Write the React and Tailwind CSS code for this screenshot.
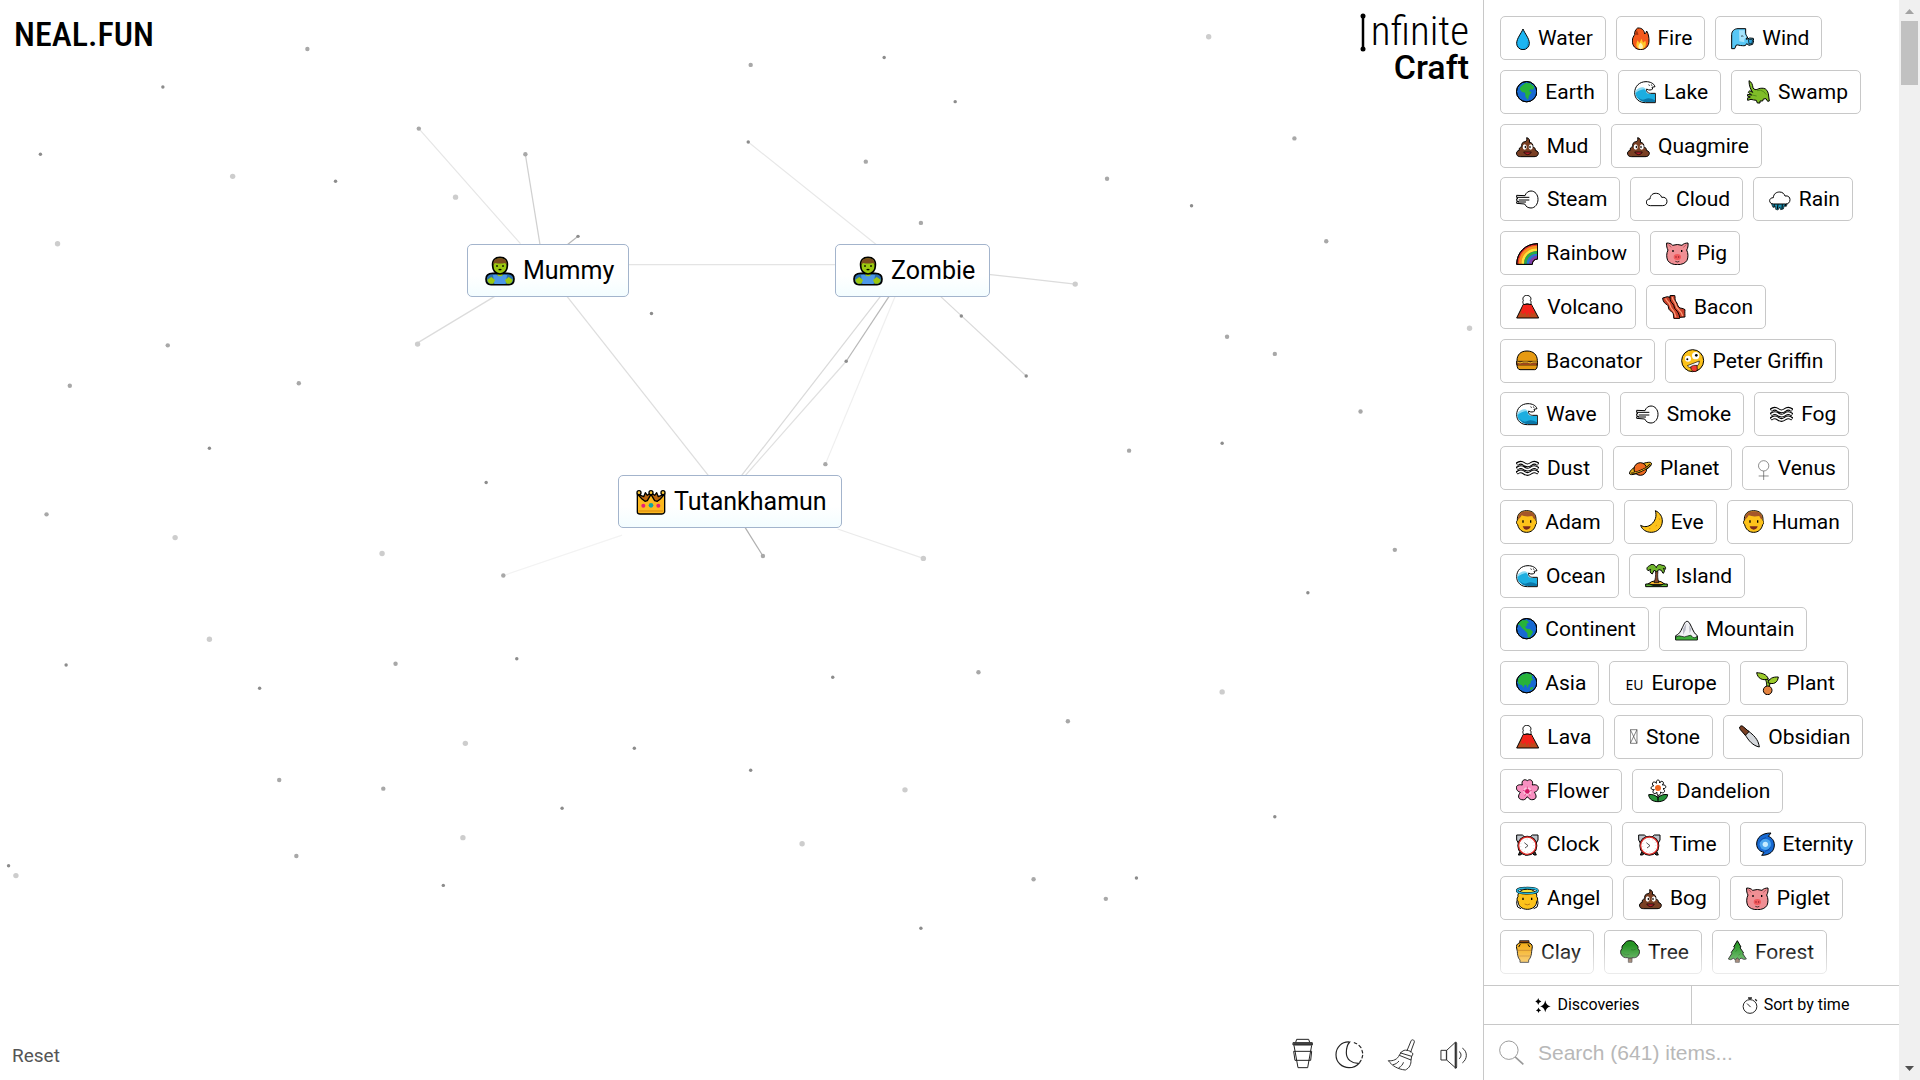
import { useState } from "react";

const Globe = ({ children }) => (
  <>
    <circle cx="32" cy="35" r="30.5" fill="#1769d2" />
    <g stroke="none" fill="#27b339">{children}</g>
    <circle cx="32" cy="35" r="30.5" fill="none" />
  </>
);

// [viewBox, drawing], every box is 72 units tall
const icons = {
  water: ["96 78 42 72", (
    <>
      <path fill="#1cb5f2" d="M117 87C112 100 98 115 98 130a19 19 0 0 0 38 0C136 115 122 100 117 87z" />
      <path stroke="none" fill="#0d8fd0" d="M130 122c3 14-3 23-14 24 14 3 20-12 14-24z" />
    </>
  )],
  fire: ["442 78 53 72", (
    <>
      <path fill="#f4591c" d="M459 84c14-1 20 8 21 18 3-2 5-5 6-9 6 10 7 20 7 30 0 15-10 26-25 26s-25-11-25-26c0-9 4-15 7-19-1-8 2-15 9-20z" />
      <path stroke="none" fill="#a8330c" d="M450 104l7-15c1 8 5 9 4 16z" />
      <path stroke="none" fill="#ffc629" d="M459 121l5 8 7-13 4 12 7-6c5 14-2 25-14 25s-17-11-9-26z" />
      <path stroke="none" fill="#fff3b0" d="M468 128c9 7 9 18 0 19-9-1-9-12 0-19z" />
    </>
  )],
  wind: ["738 78 69 72", (
    <>
      <path fill="#58c7f5" d="M740 146v-42c0-11 8-18 19-18h23v14c0 5 5 9 6 14h-4v4l10-4 11 1 1 7-3 11-11 3-7-5c-2 6-6 7-13 6-8 0-13-3-18-2l-5 11z" />
      <path stroke="none" fill="#a6e3fb" d="M762 91h17v12l6 9-7 6v9l-15-3z" />
      <path fill="#2a9fd8" strokeWidth="2" d="M790 118l13 1-2 11-9 2z" />
      <path fill="none" strokeWidth="2" d="M768 109q3-3 7 0" />
    </>
  )],
  earth: ["0 0 64 72", (
    <Globe>
      <path d="M14 20l14-11 14 1 13 10-4 10-6-3-6 6 8 4-8 10-3 13-7-9-2-13-9-2-7-8z" />
    </Globe>
  )],
  americas: ["0 0 64 72", (
    <Globe>
      <path d="M5 23l11-13 17 0 6 7-8 3 3 5-7 4 5 6 10 1 9 8-5 10-6 8-5-1-1-12-7-8-9-8-7-9z" />
    </Globe>
  )],
  asia: ["0 0 64 72", (
    <Globe>
      <path d="M5 28C9 14 22 6 36 7l13 5-2 9 5 6-8 2 0 8-6 4-3 10-5-10-5 1-1 9-7-9-9-2zM42 50l10-3-2 8-8 2z" />
    </Globe>
  )],
  wave: ["96 397 66 72", (
    <>
      <path fill="#fff" d="M160 465v-28h-14c-9 0-14-6-12-13 7 5 14 3 18 0l-2-5 9-2c-3-10-15-15-27-15-20 0-34 14-34 33 0 18 13 30 32 30z" />
      <path stroke="none" fill="#1caee0" d="M159 463v-24h-14c-8 0-14-5-14-13-10-6-20 0-31 8 0 18 14 29 32 29z" />
      <path stroke="none" fill="#8bdaf3" d="M101 429c10-12 24-14 31-5-10 0-21 3-31 12z" />
      <path stroke="none" fill="#0b77a8" d="M108 448q10 12 22 6t29 4v5h-30q-14-2-21-15z" />
      <path fill="none" strokeWidth="2" d="M139 411l5 3M148 410l2 5" />
    </>
  )],
  croc: ["788 240 69 72", (
    <>
      <path fill="#7fbd28" d="M794 242c8 4 11 12 12 22 4 5 8 6 13 4 5-3 12-4 19-3 8 1 12 9 14 16l3 22-5 1-5-8-8 1-2 6-8 0 0 6h-8l-3-8c-6 0-10-2-16-3l-10 3-2-6 10-4-9-3 1-5 12 2-10-8 4-5 9 5c-6-8-11-20-11-35z" />
      <path fill="none" strokeWidth="2" stroke="#3e7512" d="M818 272q12-4 20 3l8 9M803 285l14 3" />
    </>
  )],
  poop: ["96 402 68 72", (
    <>
      <path fill="#7a4024" d="M128 413c8 1 10 9 8 14 9 1 12 7 10 14 6 1 9 5 8 10 8 2 11 8 8 13-2 5-7 6-12 6h-40c-6 0-11-2-12-7-2-6 2-11 8-12-2-6 2-10 8-11-3-8 1-14 9-15 4-1 7-5 5-12z" />
      <ellipse cx="122" cy="441" rx="6" ry="8" fill="#fff" stroke="none" />
      <ellipse cx="140" cy="441" rx="6" ry="8" fill="#fff" stroke="none" />
      <ellipse cx="124" cy="441" rx="2" ry="4" fill="#000" stroke="none" />
      <ellipse cx="138" cy="441" rx="2" ry="4" fill="#000" stroke="none" />
      <path fill="#b3202b" strokeWidth="2" d="M119 456h23q-3 8-11 8t-12-8z" />
    </>
  )],
  gust: ["96 563 69 72", (
    <>
      <path fill="#fff" d="M123 589c3-9 10-14 18-14 12 0 21 11 21 25s-9 26-21 26c-9 0-15-4-19-12l-24-2v-5h6l-6-3v-6h4l-4-4v-6z" />
      <path fill="none" strokeWidth="3" d="M98 594h38M104 602h32M102 608h24" />
    </>
  )],
  cloud: ["484 563 65 72", (
    <path fill="#fff" d="M497 619c-16 0-16-20-1-20 1-12 9-18 19-17 9 0 14 6 16 12 10-2 16 4 16 12s-5 13-14 13z" />
  )],
  rain: ["850 563 65 72", (
    <>
      <path fill="#1a8fb0" strokeWidth="2" d="M857 612h48l-3 9-6-2-3 10-8 2-3-8-5 9-7-2v-8l-8 2z" />
      <path fill="none" stroke="#000" d="M866 615l-1 9M877 615l-2 14M890 615l-1 14M900 614l-2 8" />
      <path fill="#fff" d="M864 614c-16 0-16-19-1-19 1-12 9-17 19-17 9 0 14 6 16 12 10-2 15 4 15 11 0 8-5 13-13 13z" />
    </>
  )],
  rainbow: ["96 723 67 72", (
    <>
      <path fill="#e5322d" d="M98 793c0-35 26-62 63-62v46c-10 0-16 7-16 16z" />
      <g fill="none" strokeWidth="8">
        <path stroke="#f7941d" d="M108 792c0-30 22-51 52-51" />
        <path stroke="#fde23a" d="M116 792c0-26 18-43 44-43" />
        <path stroke="#23b04a" d="M124 792c0-21 15-35 36-35" />
        <path stroke="#2578d4" d="M132 792c0-16 12-27 28-27" />
        <path stroke="#7c3fae" d="M140 792c0-12 9-20 20-20" />
      </g>
      <path fill="none" d="M98 793c0-35 26-62 63-62v46c-10 0-16 7-16 16z" />
    </>
  )],
  pig: ["543 723 69 72", (
    <>
      <path fill="#f08f94" d="M545 729c7 0 14 2 18 7q14-5 28 0c4-5 11-7 18-7 1 9-1 16-4 21 5 10 5 22 1 31-5 9-16 13-29 13s-24-4-29-13c-4-9-4-21 1-31-3-5-5-12-4-21z" />
      <path fill="none" strokeWidth="2" stroke="#9c3d48" d="M550 734l9 8M604 734l-9 8" />
      <ellipse cx="577" cy="771" rx="11" ry="9" fill="#f2595c" stroke="none" />
      <path d="M564 750v6M590 750v6" strokeWidth="4" />
      <path strokeWidth="3" stroke="#7c1620" d="M573 769v4M581 769v4" />
      <path fill="none" strokeWidth="2" d="M571 784q6 4 12 0" />
    </>
  )],
  volcano: ["96 75 70 72", (
    <>
      <path fill="#bd4a1c" d="M98 144l20-41h24l22 41z" />
      <path stroke="none" fill="#f2231b" d="M118 104h24l10 23-6 6-5-8-3 16-5-14-5 12-4-13-5 7-8-5z" />
      <path fill="#fff" d="M119 104c-2-5-4-8-1-12-4-8 2-16 10-16 10 0 16 8 11 16 4 3 1 8 2 12q-11-6-22 0z" />
    </>
  )],
  bacon: ["532 75 71 72", (
    <>
      <path fill="#c9402a" d="M534 84l14-4 8 2v-5l14-1c3 7-1 13 4 19 5 5 4 12 9 17 5 4 12 2 18 7-1 9 0 16 0 22l-14 1-3 4h-16c-3-8 0-14-4-18-5-5-8-5-11-10s0-10-6-14c-7-3-13-11-13-20z" />
      <path fill="none" strokeWidth="3" d="M556 80c0 12 3 17 9 22 5 6 2 12 8 17s10 12 13 25" />
      <path fill="none" stroke="#ff9d78" strokeWidth="4" d="M543 85c2 9 10 11 12 18s3 12 9 17 5 10 10 22M563 81c0 9 7 13 9 20s3 12 9 17 10 10 13 20" />
    </>
  )],
  burger: ["96 237 66 72", (
    <>
      <path fill="#e69a12" d="M99 272c0-18 11-29 30-29s31 11 31 29q3 6 0 12c0 8-2 15-8 15h-44c-6 0-9-7-9-15q-3-6 0-12z" />
      <path fill="#8a4a1c" strokeWidth="2" d="M98 274h62v11H98z" />
      <path stroke="#f2c12b" strokeWidth="3" fill="none" d="M100 276l8 3 10-3h12l9 3 8-3h12" />
      <path stroke="#e2571e" strokeWidth="2" d="M102 283h54" />
    </>
  )],
  zany: ["588 237 70 72", (
    <>
      <circle cx="623" cy="272" r="33" fill="#fcc21b" />
      <circle cx="609" cy="266" r="9" fill="#fff" stroke="none" />
      <circle cx="632" cy="257" r="11" fill="#fff" stroke="none" />
      <circle cx="607" cy="268" r="3" fill="#000" stroke="none" />
      <circle cx="634" cy="256" r="4" fill="#000" stroke="none" />
      <path fill="#fff" strokeWidth="2" d="M607 287l36-14c0 10-6 18-16 20s-16-1-20-6z" />
      <path fill="#f03c32" strokeWidth="2" d="M617 290q8-6 19-4l1 14q-5 7-14 4-6-5-6-14z" />
    </>
  )],
  fog: ["854 397 69 72", (
    <>
      <g fill="none" stroke="#000" strokeWidth="11">
        <path d="M856 422q11-9 22-1t21 0 22 1M856 435q11-9 22-1t21 0 22 1M856 448q11-9 22-1t21 0 22 1" />
      </g>
      <g fill="none" stroke="#fff" strokeWidth="5">
        <path d="M858 422q10-9 20-1t21 0 20 1M858 435q10-9 20-1t21 0 20 1M858 448q10-9 20-1t21 0 20 1" />
      </g>
    </>
  )],
  planet: ["433 558 69 72", (
    <>
      <path fill="#e8b21e" d="M435 612c-2-8 8-18 26-26s36-12 39-7c3 6-8 16-24 24s-38 14-41 9z" />
      <circle cx="467" cy="597" r="19" fill="#ee6a1f" />
      <path fill="none" stroke="#000" strokeWidth="6" d="M440 609c8 1 22-3 34-9 12-5 19-11 23-17" />
      <path fill="none" stroke="#e8b21e" strokeWidth="3" d="M440 609c8 1 22-3 34-9 12-5 19-11 23-17" />
    </>
  )],
  venus: ["819 558 34 72", (
    <path fill="none" stroke="#555" strokeWidth="2" d="M836 572a15 15 0 1 1 0 31 15 15 0 1 1 0-31zM836 603v29M821 618h30" />
  )],
  man: ["96 720 64 72", (
    <>
      <path fill="#fcc21b" d="M100 751c-1-18 9-29 28-29s29 11 28 29c4 4 3 10-1 13-3 14-13 23-27 23s-24-9-27-23c-4-3-5-9-1-13z" />
      <path fill="#a4562a" stroke="none" d="M102 749c-1-16 9-25 26-25s27 9 26 25c-5-2-7-6-9-11-12 2-22 2-32-2-3 6-7 10-11 13z" />
      <path d="M117 751v7M140 751v7" strokeWidth="4" />
      <path fill="#7b2a1c" stroke="none" d="M116 769h24q-3 10-12 10t-12-10z" />
    </>
  )],
  moon: ["465 720 69 72", (
    <>
      <path fill="#fcc21b" d="M511 722c14 6 21 18 21 31 0 20-15 34-33 34-15 0-28-8-32-21 10 6 22 5 32-3 12-10 17-24 12-41z" />
      <path stroke="#e08f13" strokeWidth="3" fill="none" d="M522 745l3 5M512 768l4-3M492 776h4" />
    </>
  )],
  island: ["480 72 69 72", (
    <>
      <path fill="#f7b52c" d="M486 134q28-24 56 0z" />
      <path fill="#5cb531" d="M482 132h13l8 4h24l8-4h12v8h-65z" />
      <path fill="#85482a" strokeWidth="2" d="M511 94h8c-2 12-1 24 3 34h-15c4-10 6-22 4-34z" />
      <path fill="#6fb52c" d="M514 83c2-9 10-12 17-7 8-1 13 6 10 12l-6-3c5 6 4 13-1 15l-5-9-7-2-7 6-8-4-5 11c-7-3-8-8-5-14l-8 4c-6-5-3-12 4-14 6-8 16-6 21 5z" />
    </>
  )],
  mountain: ["570 232 69 72", (
    <>
      <path fill="#f1f1f4" d="M572 300v-12c9-3 15-12 20-24 5-10 8-19 14-19s9 8 14 18c5 11 9 20 17 25v12z" />
      <path stroke="none" fill="#b9bac6" d="M594 268l10-17-2 20-8 15zM612 256l7 13-5 12z" />
      <path fill="#3fae3a" strokeWidth="2" d="M572 292q10-6 18-2t18-1 14 2 15-1v11h-65z" />
    </>
  )],
  plant: ["799 393 69 72", (
    <>
      <path fill="none" stroke="#000" strokeWidth="10" d="M827 413q8 5 8 32M836 445q-1-18 8-24" />
      <path fill="none" stroke="#7cb52b" strokeWidth="5" d="M827 413q8 5 8 32M836 443q-1-18 8-22" />
      <path fill="#9ccb2b" d="M801 398c15 1 30 4 35 19-18 6-32-2-35-19z" />
      <path fill="#9ccb2b" d="M866 411c-17-1-28 5-31 17 17 7 29 0 31-17z" />
      <circle cx="834" cy="451" r="13" fill="#e48340" />
    </>
  )],
  knife: ["751 555 64 72", (
    <>
      <path fill="#d5d8dc" d="M769 583l10-10c15 12 30 24 33 48-19-4-32-18-43-38z" />
      <path fill="#7a4024" d="M753 561c4-5 8-4 12 0l16 14-11 11-15-17q-3-4-2-8z" />
    </>
  )],
  blossom: ["96 717 68 72", (
    <>
      <path fill="#f78fc0" d="M130 722c9-7 19 0 15 13 13-3 21 3 17 13-2 5-6 7-11 9 8 10 7 20-4 22-7 1-12-2-17-9-5 8-10 11-17 9-11-2-12-12-4-22-5-2-9-4-11-9-4-10 4-16 17-13-4-13 6-20 15-13z" />
      <circle cx="130" cy="754" r="12" fill="#fbc3dc" stroke="none" />
      <circle cx="130" cy="754" r="7" fill="#d21665" stroke="none" />
      <path stroke="#d21665" strokeWidth="2" d="M130 740v7M117 751l6 2M143 751l-6 2M122 767l4-6M138 767l-4-6" />
    </>
  )],
  daisy: ["491 717 61 72", (
    <>
      <path fill="#27933a" d="M493 764c10-2 20 1 28 9 8-8 18-11 29-9-2 14-14 21-29 21s-27-7-28-21z" />
      <path strokeWidth="4" d="M521 760v22" />
      <path fill="#fff" d="M516 730c-3-12 12-14 10-1 5-11 17-2 8 6 13-3 14 12 2 11 10 6 2 18-7 10 1 13-13 13-11 1-8 9-18-1-8-8-12 3-13-11-2-11-9-7 0-18 8-8z" />
      <circle cx="521" cy="744" r="9" fill="#f0651f" stroke="none" />
    </>
  )],
  tofu: ["433 555 23 72", (
    <path fill="none" stroke="#444" strokeWidth="2" d="M434 569h20v41h-20zl20 41M454 569l-20 41" />
  )],
  clock: ["96 97 69 72", (
    <>
      <path fill="#333" d="M107 157l-4 9h7l6-6M153 157l4 9h-7l-6-6" />
      <path fill="#bfc5cc" d="M98 121v-15h17l6 5-18 19zM162 121v-15h-17l-6 5 18 19z" />
      <circle cx="130" cy="138" r="26" fill="#fff" stroke="#000" strokeWidth="8" />
      <circle cx="130" cy="138" r="26" fill="#fff" stroke="#e02f2a" strokeWidth="4" />
      <path fill="none" strokeWidth="2" d="M121 129l11 9-9 7" />
      <path strokeWidth="1.5" stroke="#888" strokeDasharray="2 8" fill="none" d="M130 118a20 20 0 1 1 0 40 20 20 0 1 1 0-40" />
    </>
  )],
  cyclone: ["810 97 57 72", (
    <>
      <path fill="#1769d2" d="M855 100l-8 10c11 4 18 13 18 26 0 18-13 31-38 31l7-9c-14-3-22-12-22-25 0-20 16-33 43-33z" />
      <circle cx="838" cy="134" r="17" fill="#4aa4ee" stroke="none" />
      <circle cx="838" cy="134" r="8" fill="#c8ecff" stroke="none" />
      <path fill="none" stroke="#0a3c92" strokeWidth="2" d="M822 126q5-11 18-12M853 143q-5 10-16 12" />
    </>
  )],
  angel: ["96 258 69 72", (
    <>
      <path fill="#fff" d="M99 301l-1 9 3 11 10 5M161 301l1 9-3 11-10 5" />
      <path fill="#fcc21b" d="M102 290c-2-12 8-22 28-22s30 10 28 22c4 5 4 10 0 14 0 14-12 24-28 24s-28-10-28-24c-4-4-4-9 0-14z" />
      <path fill="#f5e13c" stroke="none" d="M104 286q4-17 26-17t26 17q-8-8-26-8t-26 8z" />
      <ellipse cx="130" cy="272" rx="31" ry="8" fill="none" stroke="#000" strokeWidth="7" />
      <ellipse cx="130" cy="272" rx="31" ry="8" fill="none" stroke="#27b7dc" strokeWidth="4" />
      <path d="M117 293v7M143 293v7" strokeWidth="4" />
      <path fill="none" strokeWidth="2" stroke="#a35a10" d="M122 312q8 5 16 0" />
    </>
  )],
  vase: ["95 420 51 72", (
    <>
      <path fill="#f5b01e" d="M107 428h26c5 2 11 5 11 12 0 6-2 8-2 14s-2 20-9 26v7h-26v-7c-7-6-8-20-8-26s-3-8-3-14c0-7 6-10 11-12z" />
      <path fill="#9a4f16" strokeWidth="2" d="M106 422h28v6h-28z" />
      <path fill="none" stroke="#b26a10" strokeWidth="2" d="M99 451h42M102 468h36" />
      <path fill="none" strokeWidth="3" d="M103 441l5-8M136 441l-5-8" />
    </>
  )],
  tree: ["405 420 60 72", (
    <>
      <path fill="#7b5138" strokeWidth="2" d="M430 470h11v17h-11z" />
      <path fill="#269324" d="M435 422c10 0 15 4 17 10 7 4 8 9 7 14 6 5 5 12 3 16-4 10-12 12-18 11-6 2-12 2-17 0-8 1-15-2-19-11-2-5-2-11 3-16-1-6 1-11 7-14 3-7 8-10 17-10z" />
      <path fill="none" stroke="#12630f" strokeWidth="2" d="M415 461q9 7 18 2M438 449q8 3 14-2" />
    </>
  )],
  forest: ["728 420 57 72", (
    <>
      <path fill="#7b5138" strokeWidth="2" d="M750 470h12v17h-12z" />
      <path fill="#2c9a2a" d="M756 422l11 19-3 2 11 16-3 2 11 16-8 1-8-4-5 5-6-5-6 5-6-4-8 4-7-2 11-17-3-2 11-15-3-2z" />
      <path fill="none" stroke="#12630f" strokeWidth="2" d="M750 455l6-5M759 466l7-5" />
    </>
  )],
};

const nodeIcons = {
  zombie: ["0 0 90 96", (
    <>
      <path fill="#2a6fb0" strokeWidth="5" d="M3 72c0-12 8-17 20-17h43c13 0 21 5 21 17 0 11-5 17-15 17H18C8 89 3 83 3 72z" />
      <path fill="#4d98e8" stroke="none" d="M24 60l10-1q10 8 22 0l10 1-4 27H28z" />
      <path fill="#9bc810" stroke="none" d="M7 74l12-8 11 9-5 11H15q-8-3-8-12zM83 74l-12-8-11 9 5 11h10q8-3 8-12zM36 54h18l-2 8q-7 4-14 0z" />
      <path fill="#9bc810" strokeWidth="5" d="M23 33C21 16 30 7 45 7s24 9 22 26c0 13-9 24-22 24S23 46 23 33z" />
      <path fill="#7c4c1d" stroke="none" d="M25 28C24 16 32 10 45 10s21 6 20 18l-6-4q-14 3-28 0z" />
      <path d="M36 31v4M54 31v4" strokeWidth="5" />
      <path d="M41 45q4-4 8 0" fill="none" strokeWidth="4" />
    </>
  )],
  crown: ["0 0 90 96", (
    <>
      <path fill="#b9650f" strokeWidth="4" d="M8 26l15 6 5-12 6 8 11-8 11 8 6-8 5 12 15-6v40H8z" />
      <path fill="#fcb81f" strokeWidth="4" d="M4 24l15 16 8 6 7-2 11-19 11 19 8 2 8-6 14-16v54q-2 6-8 6H12q-8 0-8-6z" />
      <g fill="#fcc93a" strokeWidth="4">
        <circle cx="9" cy="20" r="6" />
        <circle cx="45" cy="20" r="6" />
        <circle cx="81" cy="20" r="6" />
      </g>
      <path stroke="#d9880f" fill="none" d="M8 75h74" />
      <g stroke="none">
        <circle cx="22" cy="59" r="6" fill="#e81e78" />
        <circle cx="45" cy="58" r="7" fill="#12a5a0" />
        <circle cx="67" cy="59" r="6" fill="#e81e78" />
      </g>
    </>
  )],
};

const items = [
  ["Water", "water"], ["Fire", "fire"], ["Wind", "wind"],
  ["Earth", "earth"], ["Lake", "wave"], ["Swamp", "croc"],
  ["Mud", "poop"], ["Quagmire", "poop"],
  ["Steam", "gust"], ["Cloud", "cloud"], ["Rain", "rain"],
  ["Rainbow", "rainbow"], ["Pig", "pig"],
  ["Volcano", "volcano"], ["Bacon", "bacon"],
  ["Baconator", "burger"], ["Peter Griffin", "zany"],
  ["Wave", "wave"], ["Smoke", "gust"], ["Fog", "fog"],
  ["Dust", "fog"], ["Planet", "planet"], ["Venus", "venus"],
  ["Adam", "man"], ["Eve", "moon"], ["Human", "man"],
  ["Ocean", "wave"], ["Island", "island"],
  ["Continent", "americas"], ["Mountain", "mountain"],
  ["Asia", "asia"], ["Europe", "eu"], ["Plant", "plant"],
  ["Lava", "volcano"], ["Stone", "tofu"], ["Obsidian", "knife"],
  ["Flower", "blossom"], ["Dandelion", "daisy"],
  ["Clock", "clock"], ["Time", "clock"], ["Eternity", "cyclone"],
  ["Angel", "angel"], ["Bog", "poop"], ["Piglet", "pig"],
  ["Clay", "vase"], ["Tree", "tree"], ["Forest", "forest"],
];

const nodes = [
  { name: "Mummy", icon: "zombie", left: 467, top: 244 },
  { name: "Zombie", icon: "zombie", left: 835, top: 244 },
  { name: "Tutankhamun", icon: "crown", left: 618, top: 475 },
];

// x, y, size: 1 small and dark, 3 big and pale
const dots = [
  [251, 40, 2], [133, 71, 1], [33, 126, 1], [190, 144, 3], [274, 148, 1], [47, 199, 3],
  [342, 105, 2], [429, 126, 2], [372, 161, 3], [472, 193, 1], [613, 53, 2], [722, 47, 1],
  [780, 83, 1], [611, 116, 1], [707, 132, 2], [987, 30, 3], [904, 146, 2], [973, 168, 1],
  [1057, 113, 2], [752, 182, 2], [1083, 197, 2], [878, 232, 3], [785, 258, 1], [838, 307, 1],
  [691, 295, 1], [1002, 275, 2], [1041, 289, 2], [1200, 268, 3], [1111, 336, 2], [998, 362, 1],
  [922, 368, 2], [532, 256, 1], [341, 281, 3], [137, 282, 2], [57, 315, 2], [244, 313, 2],
  [171, 366, 1], [38, 420, 2], [143, 439, 3], [397, 394, 1], [312, 452, 3], [411, 470, 2],
  [623, 454, 2], [754, 456, 3], [674, 379, 2], [1139, 449, 2], [1068, 484, 1], [171, 522, 3],
  [54, 543, 1], [323, 542, 2], [212, 562, 1], [422, 538, 1], [380, 607, 3], [518, 611, 1],
  [613, 629, 1], [680, 553, 1], [799, 549, 2], [872, 589, 2], [998, 565, 3], [739, 645, 3],
  [228, 637, 2], [313, 644, 2], [459, 660, 1], [655, 689, 3], [378, 684, 3], [242, 699, 2],
  [362, 723, 1], [7, 707, 1], [13, 715, 3], [844, 718, 2], [928, 717, 1], [903, 734, 2],
  [752, 758, 1], [1041, 667, 1],
];

const dotFill = { 1: "#8c8c8c", 2: "#a8a8a8", 3: "#cdcdcd" };
const dotRadius = { 1: 1.4, 2: 1.8, 3: 2.2 };

const lines = [
  ["M342 105L425 199", "#e6e6e6"],
  ["M429 126L441 200", "#d0d0d0"],
  ["M472 193L463 200", "#b8b8b8"],
  ["M341 280L404 242", "#dcdcdc"],
  ["M512 216H683", "#e4e4e4"],
  ["M463 242L579 389", "#dedede"],
  ["M611 116L716 200", "#e8e8e8"],
  ["M807 224L878 232", "#dcdcdc"],
  ["M768 242L838 307", "#dadada"],
  ["M719 242L605 389", "#dadada"],
  ["M726 242L691 295", "#b8b8b8"],
  ["M691 295L608 389", "#e0e0e0"],
  ["M731 242L674 379", "#efefef"],
  ["M608 430L623 454", "#b0b0b0"],
  ["M508 437L411 470", "#f3f3f3"],
  ["M684 432L754 456", "#ebebeb"],
];

function Icon({ data, className }) {
  return (
    <svg
      viewBox={data[0]}
      className={className}
      stroke="#000"
      strokeWidth="3"
      strokeLinejoin="round"
      aria-hidden="true"
    >
      {data[1]}
    </svg>
  );
}

function Item({ name, icon }) {
  return (
    <button className="flex h-11 items-center gap-2 rounded-[5px] border border-[#c8c8c8] bg-white pl-[15px] pr-3 text-[21px] leading-7 text-black hover:bg-sky-50">
      {icon === "eu" ? (
        <span className="pt-1 font-['Noto_Sans'] text-sm leading-5">EU</span>
      ) : (
        <Icon data={icons[icon]} className="h-6 w-auto shrink-0" />
      )}
      <span>{name}</span>
    </button>
  );
}

function Board() {
  return (
    <>
      <svg
        viewBox="0 0 1211 882"
        preserveAspectRatio="xMinYMin slice"
        className="absolute inset-0 h-full w-full"
        aria-hidden="true"
      >
        {lines.map(([d, stroke]) => (
          <path key={d} d={d} stroke={stroke} fill="none" />
        ))}
        {dots.map(([x, y, size]) => (
          <circle key={`${x}-${y}`} cx={x} cy={y} r={dotRadius[size]} fill={dotFill[size]} />
        ))}
      </svg>
      {nodes.map((node) => (
        <button
          key={node.name}
          className="absolute flex h-[53px] items-center gap-2 rounded-[5px] border border-[#a3b4cc] bg-linear-to-b from-white from-60% to-[#f3fdff] pl-[17px] pr-3.5 text-[25px] leading-8 text-black"
          style={{ left: node.left, top: node.top }}
        >
          <Icon data={nodeIcons[node.icon]} className="h-8 w-auto shrink-0" />
          <span>{node.name}</span>
        </button>
      ))}
    </>
  );
}

function Toolbar() {
  return (
    <div className="flex items-center gap-[22px] text-[#222]">
      <button aria-label="Coffee">
        <svg viewBox="40 54 90 96" className="h-8 w-[30px] overflow-visible" fill="none" stroke="currentColor" strokeWidth="3" strokeLinejoin="round">
          <path d="M78 67l3-9h36l3 9M70 68h58v7H70zM73 76l12 67h29l12-67M72 94h54l-3 27H76z" />
          <path d="M71 72h56" strokeWidth="5" />
        </svg>
      </button>
      <button aria-label="Dark mode">
        <svg viewBox="196 54 90 96" className="h-8 w-[30px] overflow-visible" fill="none" stroke="currentColor" strokeWidth="3.5" strokeLinecap="round">
          <path d="M240 66c-24-2-41 16-41 38 0 23 18 39 39 39 12 0 23-5 30-13-22 1-38-12-38-32 0-13 3-24 10-32z" />
          <path d="M254 68l7 3M268 76l6 7M277 91l2 8M279 106l-2 8M274 121l-4 6" />
        </svg>
      </button>
      <button aria-label="Clear">
        <svg viewBox="352 54 90 96" className="h-8 w-[30px] overflow-visible" fill="none" stroke="#333" strokeWidth="3" strokeLinejoin="round" strokeLinecap="round">
          <path d="M412 92l12-29c2-6 11-4 10 3l-11 30M401 92c6-5 26 1 29 10l-4 7-33-10zM393 99l-4 7 35 14 2-11M389 106c-6 12-18 18-33 16 12 16 29 26 51 28 12-6 18-16 17-30M371 134c8-2 12-5 16-10M388 143c7-4 11-9 13-15" />
        </svg>
      </button>
      <button aria-label="Sound">
        <svg viewBox="508 54 90 96" className="h-8 w-[30px] overflow-visible" fill="none" stroke="#333" strokeWidth="3" strokeLinejoin="round" strokeLinecap="round">
          <path d="M515 91h16v29h-16zM531 91l26-24q4-1 4 2v72q0 5-4 2l-26-23z" />
          <path d="M557 68v76" strokeWidth="4" />
          <path d="M569 95c7 4 7 16 0 21M579 85c15 9 15 32 0 43" />
        </svg>
      </button>
    </div>
  );
}

function Scrollbar() {
  return (
    <div className="flex w-[21px] shrink-0 flex-col items-center bg-[#f0f0f0]">
      <svg viewBox="0 0 21 21" className="w-[21px]" aria-hidden="true">
        <path d="M6 14l4.500-5 4.500 5z" fill="#a3a3a3" />
      </svg>
      <div className="h-16 w-[17px] bg-[#c1c1c1]" />
      <svg viewBox="0 0 21 21" className="mt-auto w-[21px]" aria-hidden="true">
        <path d="M6 7l4.500 5 4.500-5z" fill="#505050" />
      </svg>
    </div>
  );
}

function App() {
  const [search, setSearch] = useState("");

  const shown = items.filter(([name]) =>
    name.toLowerCase().includes(search.toLowerCase())
  );

  return (
    <div className="flex h-screen overflow-hidden bg-white font-['Roboto',sans-serif] text-black">
      <main className="relative flex min-w-0 flex-1 flex-col justify-between">
        <Board />
        <header className="relative flex items-start justify-between pl-3.5 pr-3.5 pt-2">
          <a href="#" className="font-['Roboto_Condensed',sans-serif] text-[34px] font-medium leading-[52px]">
            NEAL.FUN
          </a>
          <h1 className="flex flex-col items-end">
            <span className="flex items-center gap-1 font-['Roboto_Condensed','Roboto',sans-serif] text-[41px] font-light leading-[46px]">
              <svg viewBox="0 0 8 42" className="h-[42px] w-2" aria-hidden="true">
                <path d="M4 6v35" stroke="#000" strokeWidth="2.500" />
                <circle cx="4" cy="6" r="2.500" />
                <circle cx="4" cy="39" r="2.500" />
              </svg>
              nfinite
            </span>
            <span className="text-[34px] font-medium leading-[26px]">Craft</span>
          </h1>
        </header>
        <footer className="relative flex items-end justify-between pb-2.5 pl-3 pr-3.5">
          <button className="text-[19px] leading-7 text-[#555]">Reset</button>
          <Toolbar />
        </footer>
      </main>

      <aside className="flex w-[437px] shrink-0 border-l border-[#c8c8c8]">
        <div className="flex min-w-0 flex-1 flex-col">
          <div className="relative flex min-h-0 flex-1 flex-wrap content-between gap-x-2.5 overflow-hidden pb-[11px] pl-4 pr-6 pt-4">
            {shown.map(([name, icon]) => (
              <Item key={name} name={name} icon={icon} />
            ))}
            <div className="pointer-events-none absolute inset-x-0 bottom-0 h-10 bg-linear-to-b from-white/0 to-white/90" />
          </div>
          <div className="flex h-10 border-y border-[#c8c8c8] text-base">
            <button className="flex flex-1 items-center justify-center gap-1.5 border-r border-[#c8c8c8]">
              <svg viewBox="150 590 48 50" className="h-4 w-4" aria-hidden="true">
                <path d="M181 600q3 17 17 19-14 3-17 19-3-16-16-19 13-2 16-19zM159 593q1 9 10 11-9 2-10 11-1-9-9-11 8-2 9-11zM160 623q1 7 8 9-7 1-8 8-1-7-8-8 7-2 8-9z" />
              </svg>
              Discoveries
            </button>
            <button className="flex flex-1 items-center justify-center gap-1.5">
              <svg viewBox="769 590 48 52" className="h-[17px] w-4" fill="none" stroke="#222" strokeWidth="3" aria-hidden="true">
                <circle cx="793" cy="619" r="21" />
                <path d="M784 610l11 11" />
                <path d="M787 593h12M793 593v5M809 597l5 5" strokeWidth="4" />
              </svg>
              Sort by time
            </button>
          </div>
          <label className="flex h-[55px] items-center gap-3.5 pl-[15px]">
            <svg viewBox="45 725 76 76" className="h-[25px] w-[25px] shrink-0" fill="none" stroke="#999" strokeWidth="3" aria-hidden="true">
              <circle cx="75" cy="756" r="28" />
              <path d="M94 776l25 23" strokeWidth="5" />
            </svg>
            <input
              type="text"
              aria-label="Search items"
              value={search}
              onChange={(e) => setSearch(e.target.value)}
              placeholder="Search (641) items..."
              className="min-w-0 flex-1 bg-transparent font-['Liberation_Sans',sans-serif] text-[21px] placeholder:text-[#b8b8b8] focus:outline-none"
            />
          </label>
        </div>
        <Scrollbar />
      </aside>
    </div>
  );
}

export default App;
